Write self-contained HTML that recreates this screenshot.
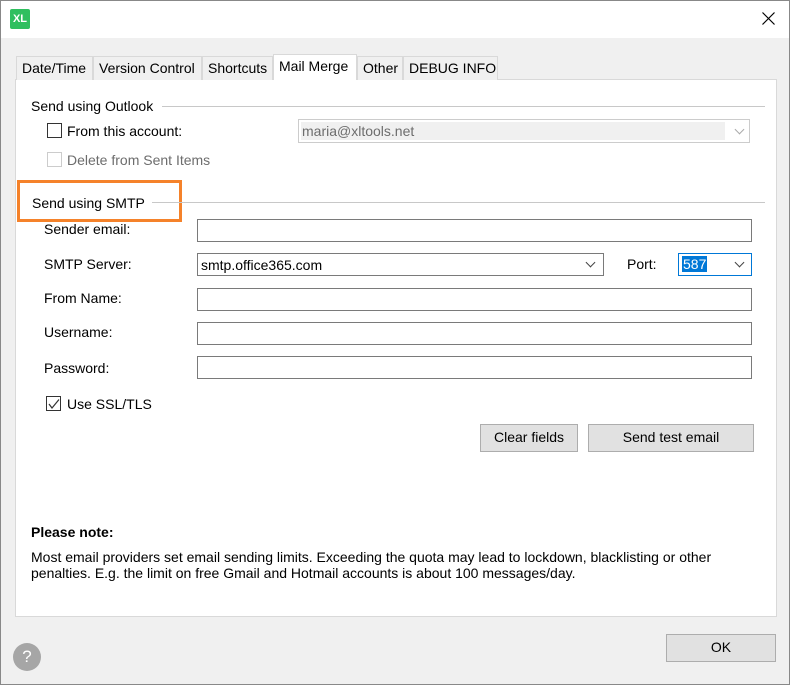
<!DOCTYPE html>
<html><head><style>
*{margin:0;padding:0;box-sizing:border-box}
body{width:790px;height:685px;background:#f0f0f0;font-family:"Liberation Sans",sans-serif;font-size:14px;color:#000;position:relative;overflow:hidden}
.a{position:absolute;white-space:nowrap}
.tab{position:absolute;top:56px;height:24px;background:#f0f0f0;border:1px solid #d9d9d9;border-bottom:none;padding:3px 0 0 5px}
.inp{position:absolute;background:#fff;border:1px solid #7a7a7a;height:23px}
.cb{position:absolute;width:15px;height:15px;border:1px solid #333;background:#fff}
.btn{position:absolute;background:#e1e1e1;border:1px solid #adadad;text-align:center;line-height:25px}
.line{position:absolute;height:1px;background:#c8c8c8}
.chev{position:absolute;width:7px;height:7px;border-right:1px solid #444;border-bottom:1px solid #444;transform:rotate(45deg)}
</style></head><body>
<div class="a" style="left:0;top:0;width:790px;height:38px;background:#fff"></div>
<div class="a" style="left:10px;top:9px;width:20px;height:20px;background:#2fbf5f;border-radius:2px;color:#fff;font-weight:bold;font-size:11px;text-align:center;line-height:20px">XL</div>
<svg class="a" style="left:762px;top:12px" width="13" height="13"><path d="M0.5 0.5L12.5 12.5M12.5 0.5L0.5 12.5" stroke="#000" stroke-width="1.2"/></svg>
<div class="a" style="left:15px;top:79px;width:762px;height:538px;background:#fff;border:1px solid #d9d9d9"></div>
<div class="tab" style="left:16px;width:77px">Date/Time</div>
<div class="tab" style="left:93px;width:109px">Version Control</div>
<div class="tab" style="left:202px;width:71px">Shortcuts</div>
<div class="tab" style="left:273px;top:54px;height:26px;width:84px;background:#fff;z-index:2;padding-top:3px">Mail Merge</div>
<div class="tab" style="left:357px;width:46px">Other</div>
<div class="tab" style="left:403px;width:95px">DEBUG INFO</div>
<div class="a" style="left:31px;top:98px">Send using Outlook</div>
<div class="line" style="left:162px;top:106px;width:603px"></div>
<div class="cb" style="left:47px;top:123px"></div>
<div class="a" style="left:67px;top:123px">From this account:</div>
<div class="a" style="left:298px;top:119px;width:452px;height:24px;border:1px solid #ccc;background:#fff"></div>
<div class="a" style="left:301px;top:122px;width:424px;height:18px;background:#f0f0f0;color:#6d6d6d;padding:1px 0 0 1px">maria@xltools.net</div>
<div class="chev" style="left:736px;top:126px;border-color:#aaa"></div>
<div class="cb" style="left:47px;top:152px;border-color:#ccc"></div>
<div class="a" style="left:67px;top:152px;color:#6d6d6d">Delete from Sent Items</div>
<div class="a" style="left:17px;top:180px;width:165px;height:42px;border:3px solid #f5822a"></div>
<div class="a" style="left:32px;top:195px">Send using SMTP</div>
<div class="line" style="left:152px;top:202px;width:613px"></div>
<div class="a" style="left:44px;top:221px">Sender email:</div>
<div class="inp" style="left:197px;top:219px;width:555px"></div>
<div class="a" style="left:44px;top:256px">SMTP Server:</div>
<div class="inp" style="left:197px;top:253px;width:407px;padding:3px 0 0 3px">smtp.office365.com</div>
<div class="chev" style="left:587px;top:259px"></div>
<div class="a" style="left:627px;top:256px">Port:</div>
<div class="inp" style="left:678px;top:253px;width:74px;border-color:#0078d7"></div>
<div class="a" style="left:682px;top:256px;background:#0078d7;color:#fff;padding:0 1px">587</div>
<div class="chev" style="left:736px;top:259px"></div>
<div class="a" style="left:44px;top:290px">From Name:</div>
<div class="inp" style="left:197px;top:288px;width:555px"></div>
<div class="a" style="left:44px;top:324px">Username:</div>
<div class="inp" style="left:197px;top:322px;width:555px"></div>
<div class="a" style="left:44px;top:360px">Password:</div>
<div class="inp" style="left:197px;top:356px;width:555px"></div>
<div class="cb" style="left:46px;top:396px"></div>
<svg class="a" style="left:48px;top:399px" width="12" height="10"><path d="M1 5L4 9L11 0.5" stroke="#333" fill="none" stroke-width="1.2"/></svg>
<div class="a" style="left:67px;top:396px">Use SSL/TLS</div>
<div class="btn" style="left:480px;top:424px;width:98px;height:28px">Clear fields</div>
<div class="btn" style="left:588px;top:424px;width:166px;height:28px">Send test email</div>
<div class="a" style="left:31px;top:524px;font-weight:bold">Please note:</div>
<div class="a" style="left:31px;top:549px;line-height:16px">Most email providers set email sending limits. Exceeding the quota may lead to lockdown, blacklisting or other<br>penalties. E.g. the limit on free Gmail and Hotmail accounts is about 100 messages/day.</div>
<div class="btn" style="left:666px;top:634px;width:110px;height:28px">OK</div>
<div class="a" style="left:13px;top:643px;width:28px;height:28px;border-radius:50%;background:#a6a6a6;color:#fff;text-align:center;line-height:28px;font-size:17px">?</div>
<div class="a" style="left:0;top:0;width:790px;height:685px;border:1px solid #888"></div>
</body></html>
